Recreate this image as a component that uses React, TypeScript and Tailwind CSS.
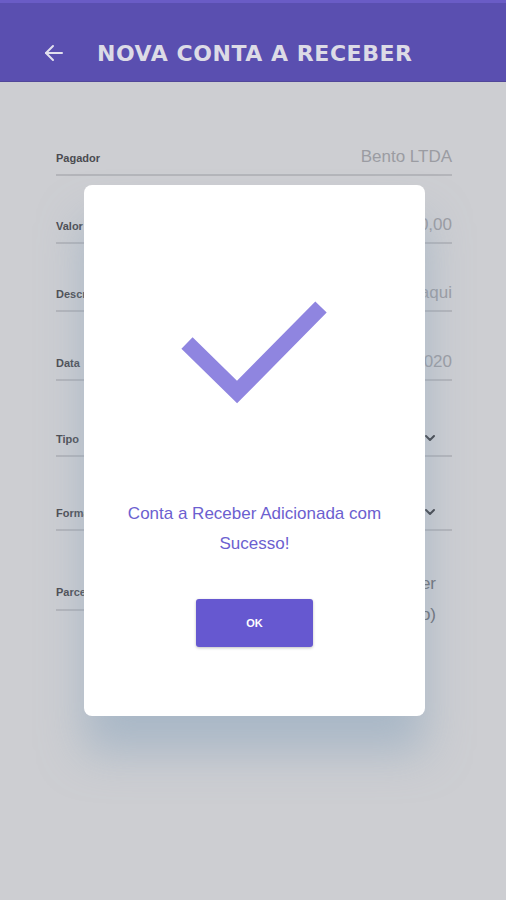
import { ChevronDown } from 'lucide-react'

const fields = [
  { label: 'Pagador', value: 'Bento LTDA', h: 'h-[70px]' },
  { label: 'Valor', value: 'R$ 0,00', h: 'h-[68px]' },
  { label: 'Descrição', value: 'Digite aqui', h: 'h-[68px]' },
  { label: 'Data', value: '01/01/2020', h: 'h-[69px]' },
  { label: 'Tipo', select: true, h: 'h-[76px]' },
  { label: 'Forma', select: true, h: 'h-[74px]' },
]

export default function App() {
  return (
    <div className="relative w-[506px] h-[900px] overflow-hidden bg-[#cdced2] font-['Liberation_Sans',sans-serif]">
      <div className="h-[3px] bg-[#6a5cc6]" />
      <header className="h-[79px] bg-[#5a4fb0] border-b border-[#514799] flex items-center pl-[42px] pt-[22px]">
        <svg width="24" height="24" viewBox="0 0 24 24" fill="none" stroke="#e2e0ee" strokeWidth="2" strokeLinecap="round" strokeLinejoin="round">
          <path d="M20 12H4" />
          <path d="M11 5l-7 7 7 7" />
        </svg>
        <h1 className="ml-[31px] text-[22px] font-bold tracking-[0.55px] text-[#dcdbe6] font-['DejaVu_Sans',sans-serif]">
          NOVA CONTA A RECEBER
        </h1>
      </header>

      <div className="pl-[56px] pr-[54px] pt-[24px]">
        {fields.map((f) => (
          <div key={f.label} className={`${f.h} flex items-end justify-between border-b-2 border-[#b4b5ba] pb-[5px]`}>
            <span className="text-[11px] font-bold text-[#4a4b50] pb-[3px]">{f.label}</span>
            {f.select ? (
              <ChevronDown size={16} strokeWidth={3} className="text-[#3c3d42] mr-[14px] mb-[4px]" />
            ) : (
              <span className="text-[17px] text-[#9b9ca2]">{f.value}</span>
            )}
          </div>
        ))}
        <div className="h-[80px] flex items-end justify-between">
          <div className="flex-1 border-b-2 border-[#b4b5ba] pb-[6px] mr-[40px]">
            <span className="text-[11px] font-bold text-[#4a4b50]">Parcelas</span>
          </div>
          <div className="flex flex-col items-end text-[17px] leading-[31px] text-[#6b6c72] mr-[16px] -mb-[19px]">
            <span>A receber</span>
            <span>(Não)</span>
          </div>
        </div>
      </div>

      <div className="absolute inset-0 flex justify-center pt-[185px] pl-[3px]">
        <div className="w-[341px] h-[531px] bg-white rounded-[8px] shadow-[0_36px_44px_rgba(140,165,190,0.55)] flex flex-col items-center">
          <svg className="mt-[105px]" width="170" height="120" viewBox="0 0 170 120">
            <path d="M17 53 L67 102 L151 17" fill="none" stroke="#8f85e0" strokeWidth="16" />
          </svg>
          <p className="mt-[89px] text-center text-[17px] leading-[30px] text-[#6c5fd0]">
            Conta a Receber Adicionada com<br />Sucesso!
          </p>
          <button className="mt-[40px] w-[117px] h-[48px] rounded-[3px] bg-[#6658d0] text-white text-[11px] font-bold shadow-[0_1px_3px_rgba(0,0,0,0.25)]">
            OK
          </button>
        </div>
      </div>
    </div>
  )
}
